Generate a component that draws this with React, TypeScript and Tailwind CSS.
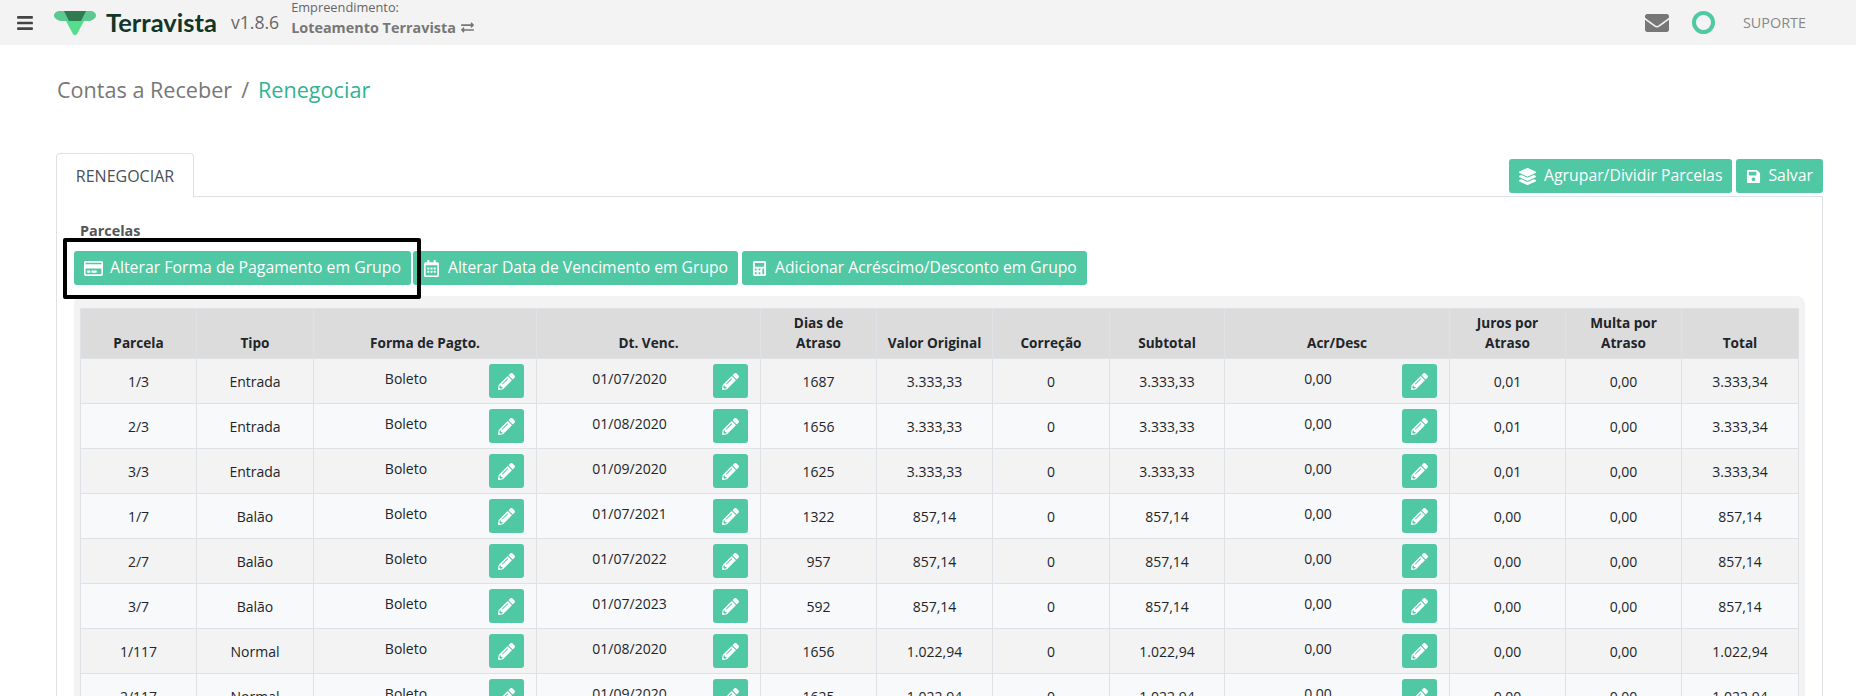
import {
  FaBars,
  FaCalculator,
  FaEnvelope,
  FaExchangeAlt,
  FaLayerGroup,
  FaPencilAlt,
  FaRegCalendarAlt,
  FaRegCreditCard,
  FaSave,
} from "react-icons/fa"

const rows = [
  ["1/3", "Entrada", "01/07/2020", "1687", "3.333,33", "3.333,33", "0,01", "3.333,34"],
  ["2/3", "Entrada", "01/08/2020", "1656", "3.333,33", "3.333,33", "0,01", "3.333,34"],
  ["3/3", "Entrada", "01/09/2020", "1625", "3.333,33", "3.333,33", "0,01", "3.333,34"],
  ["1/7", "Balão", "01/07/2021", "1322", "857,14", "857,14", "0,00", "857,14"],
  ["2/7", "Balão", "01/07/2022", "957", "857,14", "857,14", "0,00", "857,14"],
  ["3/7", "Balão", "01/07/2023", "592", "857,14", "857,14", "0,00", "857,14"],
  ["1/117", "Normal", "01/08/2020", "1656", "1.022,94", "1.022,94", "0,00", "1.022,94"],
  ["2/117", "Normal", "01/09/2020", "1625", "1.022,94", "1.022,94", "0,00", "1.022,94"],
]

const Logo = () => (
  <svg width="44" height="26" viewBox="0 0 44 26" className="ml-[19px] shrink-0">
    <path d="M7 1h30c3.500 0 6 2 6 4.500S40 10 37 11H7C4 10 1 8 1 5.500S3.500 1 7 1z" fill="#5cc990" />
    <path d="M11 1h22l-5 10H16z" fill="#2f7a50" />
    <path d="M13 11h18L24 24c-1 1.500-3 1.500-4 0z" fill="#55dd8c" />
  </svg>
)

const EditCell = ({ text }: { text: string }) => (
  <td className="border border-[#dee2e6] px-3 align-top pt-[5px]">
    <div className="flex items-start">
      <span className="flex-1 text-center pt-[4px] pr-[3px]">{text}</span>
      <button className="w-[35px] h-[34px] rounded-[3px] bg-[#50c8a3] text-white flex items-center justify-center">
        <FaPencilAlt className="text-[17px]" />
      </button>
    </div>
  </td>
)

const Th = ({ children }: { children: React.ReactNode }) => (
  <th className="border border-[#dee2e6] px-2 pb-[5px] align-bottom text-center font-bold leading-[20px] text-[13.600px]">
    {children}
  </th>
)

const Td = ({ children }: { children: React.ReactNode }) => (
  <td className="border border-[#dee2e6] px-2 text-center align-middle">{children}</td>
)

const GreenButton = ({
  icon,
  label,
  size = "text-[15.800px]",
}: {
  icon: React.ReactNode
  label: string
  size?: string
}) => (
  <button className={`h-[34px] px-[10px] rounded-[3px] bg-[#50c8a3] text-white flex items-center gap-[8px] whitespace-nowrap ${size}`}>
    {icon}
    {label}
  </button>
)

export default function App() {
  return (
    <div className="h-[696px] overflow-hidden bg-white font-['Open_Sans',sans-serif] text-[#212529]">
      <header className="h-[45px] bg-[#f3f3f3] flex items-center">
        <FaBars className="ml-[16px] text-[#444] text-[18px] shrink-0" />
        <Logo />
        <span className="ml-[9px] font-['Lato',sans-serif] font-bold text-[25.500px] leading-none text-[#12352a]">Terravista</span>
        <span className="ml-[14px] text-[17.600px] text-[#666]">v1.8.6</span>
        <div className="ml-[12px] flex flex-col text-[#777] -mt-[9px]">
          <span className="text-[12.800px] leading-[19px] text-[#666]">Empreendimento:</span>
          <span className="text-[14.400px] leading-[22px] font-bold flex items-center gap-[5px]">
            Loteamento Terravista
            <FaExchangeAlt className="text-[13px] font-normal" />
          </span>
        </div>
        <div className="ml-auto flex items-center">
          <FaEnvelope className="text-[#777] text-[24px]" />
          <span className="ml-[23px] w-[23px] h-[23px] rounded-full border-[4px] border-[#50c8a3]" />
          <span className="ml-[28px] mr-[50px] text-[14.400px] text-[#888]">SUPORTE</span>
        </div>
      </header>

      <main className="pl-[56px] pr-[33px]">
        <div className="mt-[30px] ml-px h-[30px] flex items-center text-[21.600px]">
          <span className="text-[#777]">Contas a Receber</span>
          <span className="mx-[9px] text-[#777]">/</span>
          <span className="text-[#2fb392]">Renegociar</span>
        </div>

        <div className="mt-[48px] flex items-end justify-between">
          <div className="relative -mb-px h-[45px] w-[138px] border border-b-0 border-[#dee2e6] rounded-t-[4px] bg-white flex items-center justify-center text-[16px] text-[#495057]">
            RENEGOCIAR
          </div>
          <div className="flex gap-[4px] pb-[4px]">
            <GreenButton icon={<FaLayerGroup className="text-[17px]" />} label="Agrupar/Dividir Parcelas" />
            <GreenButton icon={<FaSave className="text-[15px] -mr-px" />} label="Salvar" />
          </div>
        </div>

        <section className="-mt-px border border-[#dee2e6] pt-[24px] px-[17px]">
          <div className="ml-[6px] text-[14.400px] leading-[20px] font-bold text-[#555]">Parcelas</div>

          <div className="mt-[10px] flex gap-[2px]">
            <div className="relative">
              <GreenButton icon={<FaRegCreditCard className="text-[19px] -mr-px" />} label="Alterar Forma de Pagamento em Grupo" />
              <div className="absolute -top-[13px] -left-[11px] -right-[10px] -bottom-[14px] border-[4px] border-black rounded-[2px] pointer-events-none z-10" />
            </div>
            <GreenButton size="text-[15.700px]" icon={<FaRegCalendarAlt className="text-[17px]" />} label="Alterar Data de Vencimento em Grupo" />
            <GreenButton size="text-[15.700px] ml-[2px]" icon={<FaCalculator className="text-[15px]" />} label="Adicionar Acréscimo/Desconto em Grupo" />
          </div>

          <div className="mt-[11px] bg-[#f3f3f3] rounded-t-[8px] pt-[12px] px-[6px]">
            <table className="table-fixed border-collapse w-[1719px] text-[14px]">
              <colgroup>
                <col className="w-[116px]" />
                <col className="w-[117px]" />
                <col className="w-[223px]" />
                <col className="w-[224px]" />
                <col className="w-[116px]" />
                <col className="w-[116px]" />
                <col className="w-[117px]" />
                <col className="w-[115px]" />
                <col className="w-[225px]" />
                <col className="w-[116px]" />
                <col className="w-[116px]" />
                <col className="w-[117px]" />
              </colgroup>
              <thead>
                <tr className="h-[50px] bg-[#dcdcdc]">
                  <Th>Parcela</Th>
                  <Th>Tipo</Th>
                  <Th>Forma de Pagto.</Th>
                  <Th>Dt. Venc.</Th>
                  <Th>Dias de<br />Atraso</Th>
                  <Th>Valor Original</Th>
                  <Th>Correção</Th>
                  <Th>Subtotal</Th>
                  <Th>Acr/Desc</Th>
                  <Th>Juros por<br />Atraso</Th>
                  <Th>Multa por<br />Atraso</Th>
                  <Th>Total</Th>
                </tr>
              </thead>
              <tbody>
                {rows.map((r, i) => (
                  <tr key={r[0]} className={`h-[45px] ${i % 2 === 0 ? "bg-[#f3f3f3]" : "bg-[#f8f9fa]"}`}>
                    <Td>{r[0]}</Td>
                    <Td>{r[1]}</Td>
                    <EditCell text="Boleto" />
                    <EditCell text={r[2]} />
                    <Td>{r[3]}</Td>
                    <Td>{r[4]}</Td>
                    <Td>0</Td>
                    <Td>{r[5]}</Td>
                    <EditCell text="0,00" />
                    <Td>{r[6]}</Td>
                    <Td>0,00</Td>
                    <Td>{r[7]}</Td>
                  </tr>
                ))}
              </tbody>
            </table>
          </div>
        </section>
      </main>
    </div>
  )
}
